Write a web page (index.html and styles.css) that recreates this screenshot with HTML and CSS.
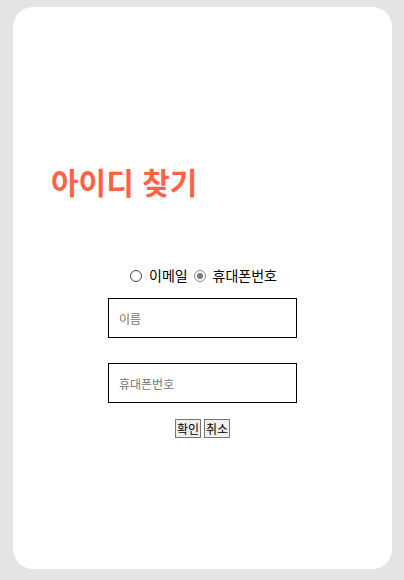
FILE: index.html
```html
<!DOCTYPE html>
<html lang="ko">
<head>
<meta charset="utf-8">
<link rel="stylesheet" href="styles.css">
</head>
<body>
<div class="card">
  <h1 class="title">아이디 찾기</h1>
  <form class="form">
    <div class="radios">
      <label><input type="radio" name="by"> 이메일</label>
      <label><input type="radio" name="by" checked> 휴대폰번호</label>
    </div>
    <input class="field" type="text" placeholder="이름">
    <input class="field" type="text" placeholder="휴대폰번호">
    <div class="buttons">
      <button type="button" class="btn">확인</button>
      <button type="button" class="btn">취소</button>
    </div>
  </form>
</div>
</body>
</html>
```

FILE: styles.css
```css
html, body {
  margin: 0;
  padding: 0;
  background: #e4e4e4;
  font-family: "Noto Sans CJK KR", "Noto Sans", sans-serif;
}
body {
  padding: 7px 12px 11px 13px;
}
.card {
  background: #fff;
  border-radius: 20px;
  width: 379px;
  height: 562px;
  box-sizing: border-box;
  padding: 152px 0 0 38px;
}
.title {
  margin: 0;
  font-size: 30px;
  font-weight: 700;
  color: #ff6347;
  line-height: 44px;
}
.form {
  margin-left: -38px;
  margin-top: 62px;
  display: flex;
  flex-direction: column;
  align-items: center;
}
.radios {
  font-size: 14px;
  line-height: 20px;
  color: #000;
}
.radios input {
  appearance: none;
  -webkit-appearance: none;
  box-sizing: border-box;
  margin: 0 3px 0 2px;
  width: 12px;
  height: 12px;
  border: 1px solid #444;
  border-radius: 50%;
  background: #fff;
  vertical-align: -1px;
}
.radios input:checked {
  border-color: #8a8a8a;
  background: radial-gradient(circle, #7a7a7a 0 2.8px, #fff 3.2px);
}
.field {
  box-sizing: border-box;
  width: 189px;
  height: 40px;
  border: 1px solid #000;
  margin-top: 13px;
  padding: 0 10px;
  font-family: inherit;
  font-size: 12px;
  outline: none;
}
.field + .field {
  margin-top: 25px;
}
.field::placeholder {
  color: #757575;
}
.buttons {
  margin-top: 16px;
  display: flex;
  gap: 3px;
}
.btn {
  font-family: inherit;
  font-size: 12px;
  padding: 0 1px;
  height: 19px;
  line-height: 17px;
  border: 1px solid #767676;
  background: #efefef;
  border-radius: 0;
  color: #000;
}
```
